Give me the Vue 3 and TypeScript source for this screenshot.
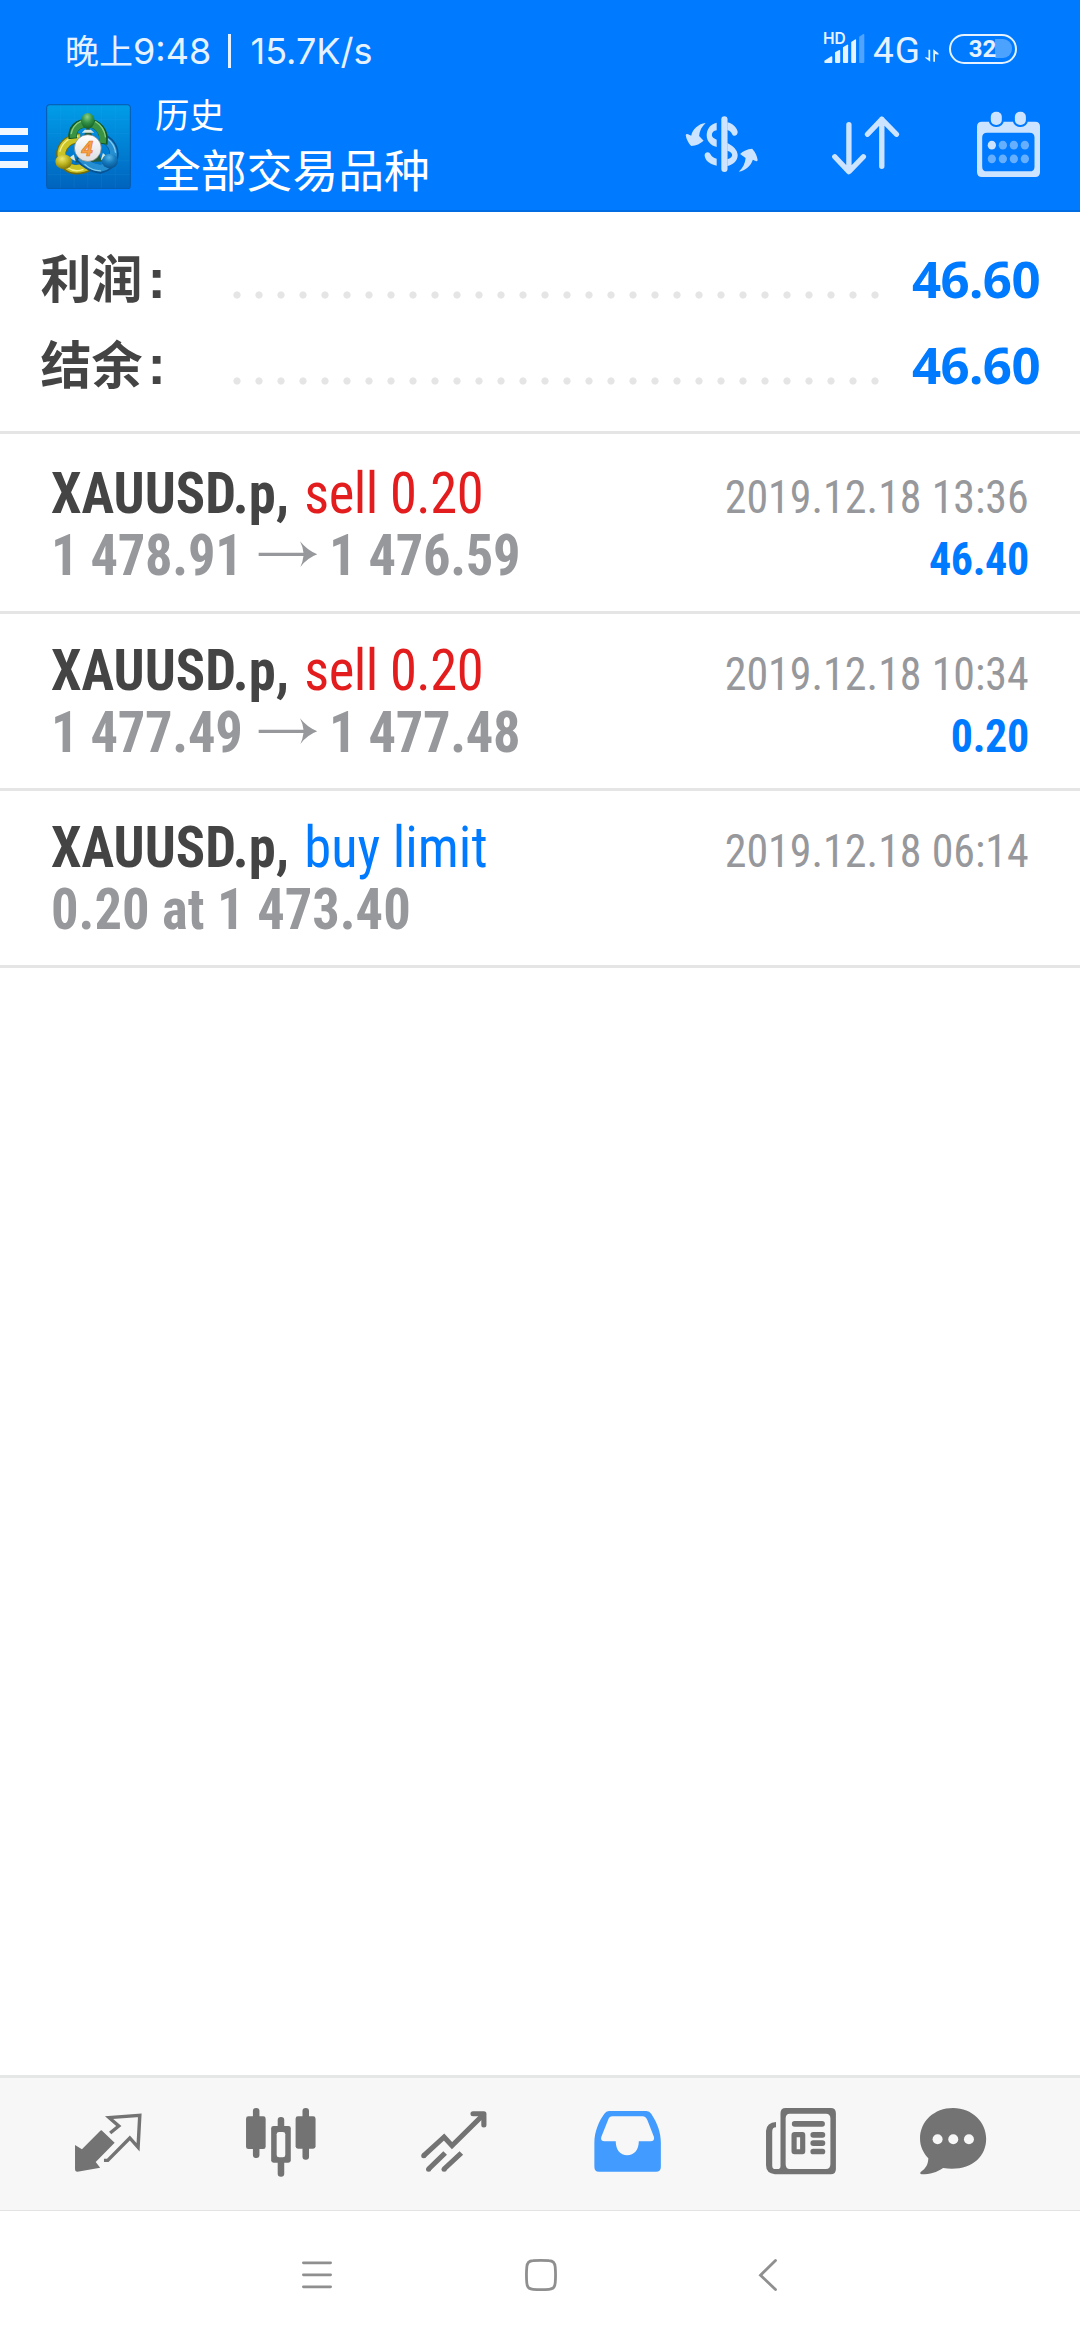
<script setup lang="ts">
interface Deal {
  symbol: string
  action: string
  side: 'sell' | 'buy'
  from: string
  to?: string
  time: string
  profit?: string
}

const summary: { label: string; value: string }[] = [
  { label: '利润', value: '46.60' },
  { label: '结余', value: '46.60' },
]

const deals: Deal[] = [
  { symbol: 'XAUUSD.p,', action: 'sell 0.20', side: 'sell', from: '1 478.91', to: '1 476.59', time: '2019.12.18 13:36', profit: '46.40' },
  { symbol: 'XAUUSD.p,', action: 'sell 0.20', side: 'sell', from: '1 477.49', to: '1 477.48', time: '2019.12.18 10:34', profit: '0.20' },
  { symbol: 'XAUUSD.p,', action: 'buy limit', side: 'buy', from: '0.20 at 1 473.40', time: '2019.12.18 06:14' },
]
</script>

<template>
  <div class="screen">
    <header class="header">
      <div class="status">
        <span class="clock"><span class="cjk">晚上</span>9:48</span>
        <i class="sep"></i>
        <span class="speed">15.7K/s</span>
        <div class="signal">
          <span class="hd">HD</span>
          <svg class="bars" viewBox="824 96 122 96" preserveAspectRatio="none" fill="#e6f2ff">
            <path d="M828 187v-5l20-13q3-1 3 2v16q0 2-2 2h-19q-2 0-2-2z" />
            <path d="M859 186v-29l12-7q3-1 3 2v34q0 3-3 3h-9q-3 0-3-3z" />
            <path d="M882 186v-44l12-8q3-1 3 2v50q0 3-3 3h-9q-3 0-3-3z" />
            <path d="M906 186v-60l12-8q2-1 2 2v66q0 3-3 3h-8q-3 0-3-3z" />
            <path opacity=".35" d="M929 186v-76l12-8q3-1 3 2v82q0 3-3 3h-9q-3 0-3-3z" />
          </svg>
        </div>
        <span class="net">4G</span>
        <svg class="updown" viewBox="1117 148 40 40" preserveAspectRatio="none" fill="#e6f2ff">
          <path d="M1127 150h5v36l-14-11v-3l9 3z" />
          <path d="M1141 186h5v-23l10 2v-4l-15-12z" />
        </svg>
        <div class="battery"><i class="charge"></i><span>32</span></div>
      </div>

      <div class="appbar">
        <div class="menu"><i></i><i></i><i></i></div>
        <svg class="logo" viewBox="48 40 254 256" preserveAspectRatio="none">
          <defs>
            <linearGradient id="sky" x1="0" y1="0" x2="0" y2="1">
              <stop offset="0" stop-color="#009de9" /><stop offset=".5" stop-color="#0081d4" /><stop offset="1" stop-color="#0063bd" />
            </linearGradient>
            <radialGradient id="g" cx=".45" cy=".25" r=".75"><stop offset="0" stop-color="#8ed08b" /><stop offset=".5" stop-color="#359447" /><stop offset="1" stop-color="#166329" /></radialGradient>
            <radialGradient id="y" cx=".4" cy=".3" r=".75"><stop offset="0" stop-color="#eee96b" /><stop offset=".5" stop-color="#bdb421" /><stop offset="1" stop-color="#776f09" /></radialGradient>
            <radialGradient id="b" cx=".45" cy=".25" r=".75"><stop offset="0" stop-color="#54b4e8" /><stop offset=".5" stop-color="#167bbd" /><stop offset="1" stop-color="#075391" /></radialGradient>
            <linearGradient id="disc" x1="0" y1="0" x2="0" y2="1"><stop offset="0" stop-color="#fff" /><stop offset="1" stop-color="#dcdde2" /></linearGradient>
          </defs>
          <rect x="50" y="42" width="250" height="252" rx="9" fill="url(#sky)" stroke="#075aa8" stroke-width="3" />
          <path d="M91 44v248M132 44v248M173 44v248M214 44v248M255 44v248M52 87h246M52 128h246M52 210h246M52 251h246" stroke="#5ac4ff" stroke-opacity=".16" stroke-width="1.5" />
          <path d="M136 215 173 100 215 212z" fill="#235a3b" />
          <path d="M150 142C118 142 98 162 93 184C90 208 110 234 133 236Q157 239 178 225" fill="none" stroke="#756c08" stroke-width="29" />
          <path d="M150 142C118 142 98 163 94 184C92 208 110 232 133 234Q156 236 178 223" fill="none" stroke="#cbc427" stroke-width="23" />
          <path d="M145 136C116 138 96 158 89 183M112 230Q134 246 160 236" fill="none" stroke="#f4f18b" stroke-width="4" />
          <path d="M223 145C243 155 254 176 251 197Q243 228 211 235C182 233 158 214 148 200" fill="none" stroke="#075394" stroke-width="27" />
          <path d="M223 147C242 157 252 176 249 196Q241 226 212 232C184 230 162 213 151 200" fill="none" stroke="#268fd2" stroke-width="21" />
          <path d="M232 144Q253 160 256 186M163 220Q184 240 212 240" fill="none" stroke="#81cbee" stroke-width="4" />
          <path d="M128 144C124 112 144 97 172 97C203 97 225 122 219 160" fill="none" stroke="#125a24" stroke-width="26" />
          <path d="M129 141C127 114 146 99 172 99C201 99 222 123 217 157" fill="none" stroke="#3a9343" stroke-width="20" />
          <path d="M123 130Q128 102 153 91M195 92Q222 108 226 140" fill="none" stroke="#87cb7c" stroke-width="4" />
          <path d="M155 126h37l-10-9h-18zM117 201l14-10 5 20zM212 208l6-21 14 12z" fill="#d7e7df" />
          <ellipse cx="173" cy="90" rx="20" ry="23" fill="url(#g)" />
          <ellipse cx="101" cy="213" rx="25" ry="22" fill="url(#y)" />
          <ellipse cx="239" cy="211" rx="24" ry="22" fill="url(#b)" />
          <circle cx="173" cy="172" r="40" fill="url(#disc)" stroke="#7b8585" stroke-width="2" />
          <text x="171" y="195" class="four" text-anchor="middle">4</text>
        </svg>
        <div class="titles">
          <span class="sub">历史</span>
          <span class="main">全部交易品种</span>
        </div>
        <svg class="i-currency" viewBox="422 336 214 198" preserveAspectRatio="none" fill="#cce4ff">
          <path d="M536.500 358V507" stroke="#cce4ff" stroke-width="18" stroke-linecap="round" />
          <path d="M514 368C495 372 485 388 485 406C485 424 497 437 514 441V419C504 414 500 411 500 405C500 398 505 392 514 391Z" />
          <path d="M479 466C479 455 493 453 496 463C499 470 505 474 514 476V497C495 493 480 483 479 466Z" />
          <path d="M545 367C560 370 572 382 575 395C576 405 564 413 559 403C557 397 553 392 545 390Z" />
          <path fill-rule="evenodd" d="M545 429C562 438 575 450 575 466C575 482 562 495 545 498V478C554 475 559 470 559 465C559 459 553 454 545 452Z" />
          <path d="M482 369C470 380 464 394 463 408L476 422C466 431 455 437 440 438C432 430 426 418 424 405Q426 400 431 403L440 407C444 388 461 371 482 369Z" />
          <path d="M578 515C590 504 597 490 598 474L582 462C590 453 603 447 617 446C627 457 632 470 633 480Q632 485 627 483L619 479C614 496 598 512 578 515Z" />
        </svg>
        <svg class="i-sort" viewBox="844 336 200 198" preserveAspectRatio="none" fill="none" stroke="#cce4ff" stroke-width="15.500" stroke-linecap="round" stroke-linejoin="round">
          <path d="M896 374V514M855 470 896 515 938 470M991.500 499V357M950 403 991.500 358 1034 403" />
        </svg>
        <svg class="i-calendar" viewBox="1266 334 190 200" preserveAspectRatio="none">
          <path fill="#cce4ff" fill-rule="evenodd" d="M1283 366H1438Q1452 366 1452 380V517Q1452 532 1438 532H1283Q1269 532 1269 517V380Q1269 366 1283 366ZM1298 399Q1284 399 1284 413V501Q1284 515 1298 515H1422Q1436 515 1436 501V413Q1436 399 1422 399Z" />
          <g fill="#cce4ff" stroke="#007aff" stroke-width="12" paint-order="stroke">
            <rect x="1309" y="336" width="32" height="40" rx="15" /><rect x="1379" y="336" width="32" height="40" rx="15" />
          </g>
          <g fill="#66afff">
            <ellipse cx="1312" cy="436.500" rx="12" ry="13" fill="#cce4ff" />
            <ellipse cx="1344" cy="436.500" rx="12" ry="13" /><ellipse cx="1376" cy="436.500" rx="12" ry="13" /><ellipse cx="1408" cy="436.500" rx="12" ry="13" />
            <ellipse cx="1312" cy="477.500" rx="12" ry="13" /><ellipse cx="1344" cy="477.500" rx="12" ry="13" /><ellipse cx="1376" cy="477.500" rx="12" ry="13" /><ellipse cx="1408" cy="477.500" rx="12" ry="13" />
          </g>
        </svg>
      </div>
    </header>

    <section class="summary">
      <div v-for="s in summary" :key="s.label" class="sum-row">
        <span class="sum-label">{{ s.label }}<span class="colon">:</span></span>
        <i class="leader"></i>
        <span class="sum-value">{{ s.value }}</span>
      </div>
    </section>

    <main class="deals">
      <article v-for="d in deals" :key="d.time" class="deal">
        <div class="left">
          <div class="line"><b>{{ d.symbol }}</b> <span :class="d.side">{{ d.action }}</span></div>
          <div class="line price" :class="{ range: d.to }">
            <span>{{ d.from }}</span>
            <template v-if="d.to">
              <svg class="arrow" viewBox="750 330 174 84" preserveAspectRatio="none" fill="#97989c">
                <path d="M752 368H882Q880 350 872 334Q893 361 922 373Q893 384 873 411Q880 395 882 378H752Z" />
              </svg>
              <span>{{ d.to }}</span>
            </template>
          </div>
        </div>
        <div class="right">
          <div class="line">{{ d.time }}</div>
          <div v-if="d.profit" class="line profit">{{ d.profit }}</div>
        </div>
      </article>
    </main>

    <nav class="tabs">
      <svg class="t1" viewBox="216 140 200 210" preserveAspectRatio="none">
        <path fill="#737373" d="M296 210 334 247 279 305 292 322 226 334Q219 334 219 326V254L239 267 291 213Q295 208 298 211Z" />
        <path fill="none" stroke="#737373" stroke-width="10" d="M321 218 346 197 318 172 407 165 402 261 378 233 314 300H303" />
      </svg>
      <svg class="t2" viewBox="712 140 208 210" preserveAspectRatio="none" fill="#737373">
        <rect x="735" y="143" width="19" height="150" rx="9" /><rect x="715" y="168" width="57" height="98" rx="7" />
        <rect x="879" y="143" width="19" height="155" rx="9" /><rect x="859" y="168" width="58" height="97" rx="7" />
        <rect x="807" y="170" width="19" height="179" rx="9" /><rect x="788" y="197" width="57" height="110" rx="7" />
        <rect x="804" y="215" width="25" height="76" rx="7" fill="#f7f7f7" />
      </svg>
      <svg class="t3" viewBox="1220 140 198 210" preserveAspectRatio="none" fill="none" stroke="#737373" stroke-width="15">
        <path d="M1231 286 1290 230 1313 256 1403 164" /><circle cx="1231" cy="286" r="7.500" fill="#737373" stroke="none" />
        <path stroke-linecap="round" stroke-linejoin="round" d="M1374 160.500H1405.500V194" />
        <path d="M1245 326 1293 278M1290 326 1340 278" />
        <circle cx="1245" cy="327" r="7.500" fill="#737373" stroke="none" /><circle cx="1290" cy="327" r="7.500" fill="#737373" stroke="none" />
      </svg>
      <svg class="t4" viewBox="154 140 200 210" preserveAspectRatio="none">
        <path fill="#429bff" fill-rule="evenodd" d="M200 152H309Q318 152 323 160C342 189 351 218 351 247V319Q351 334 337 334H171Q158 334 158 319V247C158 214 171 182 187 160Q192 152 200 152ZM210 168Q202 168 198 178L178 230Q175 243 188 243H220C220 269 233 285 253 285C274 285 287 269 287 243H321Q333 243 331 230L312 180Q307 168 298 168Z" />
      </svg>
      <svg class="t5" viewBox="653 140 208 210" preserveAspectRatio="none">
        <path fill="#737373" fill-rule="evenodd" d="M713 143H844Q859 143 859 159V326Q859 342 844 342H682Q656 339 656 315V211Q658 187 685 185V201Q674 201 674 214V316Q674 326 683 326H693Q698 326 698 318V159Q698 143 713 143ZM725 160Q713 160 713 174V311Q713 326 725 326H830Q843 326 843 311V174Q843 160 830 160Z" />
        <g fill="#737373">
          <rect x="731" y="182" width="96" height="17" rx="8" />
          <path fill-rule="evenodd" d="M739 215H762Q770 215 770 224V273Q770 282 762 282H739Q730 282 730 273V224Q730 215 739 215ZM745 231V267H755V231Z" />
          <rect x="785" y="215" width="43" height="17" rx="8" /><rect x="785" y="240" width="43" height="17" rx="8" /><rect x="785" y="265" width="43" height="17" rx="8" />
        </g>
      </svg>
      <svg class="t6" viewBox="1100 140 198 210" preserveAspectRatio="none">
        <path fill="#737373" d="M1199 143C1255 143 1295 186 1295 235C1295 293 1247 335 1170 323C1152 336 1132 342 1108 342Q1101 340 1105 335C1120 325 1127 311 1127 294C1112 276 1103 258 1103 235C1103 183 1144 143 1199 143Z" />
        <g fill="#f7f7f7"><ellipse cx="1154" cy="237" rx="14.500" ry="15" /><ellipse cx="1199.500" cy="237" rx="14.500" ry="15" /><ellipse cx="1245" cy="237" rx="14.500" ry="15" /></g>
      </svg>
    </nav>

    <footer class="sysnav">
      <svg width="36" height="36" viewBox="0 0 36 36" fill="none" stroke="#8f8f8f" stroke-width="2.800" stroke-linecap="round"><path d="M4.400 5.800H31.600M4.400 17.800H31.600M4.400 29.800H31.600" /></svg>
      <svg width="36" height="36" viewBox="0 0 36 36" fill="none" stroke="#8f8f8f" stroke-width="2.800"><path d="M10 3.700Q18 3 26 3.700Q31.800 4 32.200 10Q32.900 18 32.200 26Q31.800 32 26 32.300Q18 33 10 32.300Q4.200 32 3.800 26Q3.100 18 3.800 10Q4.200 4 10 3.700Z" /></svg>
      <svg width="36" height="36" viewBox="0 0 36 36" fill="none" stroke="#8f8f8f" stroke-width="2.800" stroke-linecap="round"><path d="M25.500 3.500 10.500 18.200 25.500 32.500" /></svg>
    </footer>
  </div>
</template>

<style>
body {
  margin: 0;
}
</style>

<style scoped>
.screen {
  width: 1080px;
  height: 2340px;
  display: flex;
  flex-direction: column;
  background: #fff;
  overflow: hidden;
  font-family: Roboto, "Noto Sans CJK SC", sans-serif;
}
svg {
  display: block;
  flex: none;
}
.header {
  box-sizing: border-box;
  height: 212px;
  flex: none;
  background: #007aff;
  border-bottom: 2px solid #006de3;
}

/* status bar */
.status {
  height: 95px;
  display: flex;
  align-items: flex-start;
  color: #e6f2ff;
  font-family: Inter, "Noto Sans CJK SC", sans-serif;
}
.clock,
.speed {
  font-size: 36px;
  line-height: 40px;
  margin-top: 30.500px;
  white-space: nowrap;
}
.clock {
  width: 145px;
  margin-left: 65px;
}
.cjk {
  font-size: 34px;
}
.sep {
  width: 2.500px;
  height: 34px;
  margin: 34px 0 0 18px;
  background: #e6f2ff;
}
.speed {
  width: 124px;
  margin-left: 20px;
}
.signal {
  position: relative;
  width: 42px;
  height: 32px;
  margin: 32px 0 0 448.500px;
}
.bars {
  width: 42px;
  height: 32px;
}
.hd {
  position: absolute;
  left: 0;
  top: -1px;
  font-size: 15.500px;
  line-height: 15px;
  font-weight: 600;
}
.net {
  width: 52px;
  margin: 31px 0 0 8px;
  font: 400 37px/40px Roboto, sans-serif;
  letter-spacing: 1px;
}
.updown {
  width: 13.800px;
  height: 13.300px;
  margin-top: 49.300px;
}
.battery {
  position: relative;
  box-sizing: border-box;
  width: 68px;
  height: 30px;
  margin: 34px 0 0 9.800px;
  border: 2.800px solid #e6f2ff;
  border-radius: 15px;
  text-align: center;
  font: 700 24px/26px Roboto, sans-serif;
}
.battery span {
  position: relative;
}
.charge {
  position: absolute;
  right: 3px;
  top: 3px;
  width: 17px;
  height: 18.500px;
  border-radius: 0 9px 9px 0;
  background: #4ca2ff;
}

/* app bar */
.appbar {
  height: 115px;
  display: flex;
  align-items: flex-start;
}
.menu {
  width: 27.500px;
  margin-top: 33px;
  display: flex;
  flex-direction: column;
  gap: 9.500px;
}
.menu i {
  height: 7px;
  background: #f0f7ff;
}
.logo {
  width: 85px;
  height: 85.500px;
  margin: 8.500px 0 0 18px;
}
.four {
  font: italic 700 62px "Open Sans", sans-serif;
  fill: #f6a044;
  stroke: #e0732a;
  stroke-width: 2px;
}
.titles {
  width: 500px;
  margin-left: 24.500px;
  display: flex;
  flex-direction: column;
  color: #fff;
  font-family: "Noto Sans CJK SC", sans-serif;
  font-weight: 400;
}
.sub {
  font-size: 34.500px;
  line-height: 36px;
}
.main {
  margin-top: 14px;
  font-size: 45.800px;
  line-height: 46px;
}
.i-currency {
  width: 73.700px;
  height: 66px;
  margin: 17px 0 0 30.300px;
}
.i-sort {
  width: 68.900px;
  height: 66px;
  margin: 17px 0 0 71.700px;
}
.i-calendar {
  width: 65.400px;
  height: 66.700px;
  margin: 16.300px 0 0 76.400px;
}

/* summary */
.summary {
  box-sizing: border-box;
  height: 222px;
  flex: none;
  padding: 21px 40px 0 40.500px;
  border-bottom: 3px solid #e5e5e5;
}
.sum-row {
  height: 86px;
  display: flex;
  align-items: baseline;
}
.sum-label {
  width: 185px;
  padding-top: 4.500px;
  color: #444;
  font: 700 51px/86px "Liberation Sans", "Noto Sans CJK SC", sans-serif;
}
.colon {
  margin-left: 5px;
  font-size: 55px;
  line-height: 1px;
}
.leader {
  align-self: flex-start;
  width: 660px;
  height: 8px;
  margin-top: 57.500px;
  background: radial-gradient(circle at center, #e5e5e5 3.200px, transparent 4px) 0 0 / 22px 8px repeat-x;
}
.sum-value {
  flex: 1;
  text-align: right;
  color: #007aff;
  font: 700 51px/86px "Noto Sans", sans-serif;
  letter-spacing: -.6px;
}

/* deals: the condensed face is narrowed a little further */
.deals {
  flex: 1;
  padding-top: 3px;
  font-family: "Roboto Condensed", Roboto, sans-serif;
  font-stretch: 75%;
}
.deal {
  box-sizing: border-box;
  height: 177px;
  padding: 25.300px 51px 0 51px;
  display: flex;
  justify-content: space-between;
  border-bottom: 3px solid #e5e5e5;
}
.line {
  height: 62px;
  line-height: 62px;
  white-space: pre;
  color: #97989c;
}
.left {
  transform: scaleX(.945);
  transform-origin: left;
}
.left .line {
  font-size: 57.700px;
}
.left b {
  color: #444;
}
.left .sell,
.left .buy {
  margin-left: 3px;
}
.left .sell {
  color: #e31d1d;
  letter-spacing: -.5px;
}
.left .buy {
  color: #007aff;
}
.left .price {
  display: flex;
  font-weight: 700;
}
.left .range {
  letter-spacing: -.3px;
}
.arrow {
  width: 63.500px;
  height: 28px;
  margin: 16px 11.500px 0 16.500px;
}
.right {
  padding-top: 3.900px;
  text-align: right;
  transform: scaleX(.948);
  transform-origin: right;
}
.right .line {
  font-size: 46.400px;
}
.right .profit {
  color: #007aff;
  font-weight: 700;
  letter-spacing: -.4px;
}

/* bottom tabs */
.tabs {
  box-sizing: border-box;
  height: 136px;
  flex: none;
  display: flex;
  padding-top: 28.700px;
  background: #f7f7f7;
  border-top: 3px solid #e5e6e6;
  border-bottom: 1px solid #e3e3e3;
}
.tabs svg {
  height: 70px;
}
.t1 { width: 68.900px; margin-left: 74.400px; }
.t2 { width: 71.600px; margin-left: 101.900px; }
.t3 { width: 68.200px; margin-left: 103.400px; }
.t4 { width: 68.900px; margin-left: 104.600px; }
.t5 { width: 71.600px; margin-left: 103px; }
.t6 { width: 68.200px; margin-left: 82.300px; }

/* system navigation */
.sysnav {
  height: 129px;
  flex: none;
  display: flex;
  padding: 46px 0 0 299px;
  box-sizing: border-box;
  gap: 187.500px;
  background: #fff;
}
.sysnav svg:last-child {
  margin-left: 4px;
}
</style>
